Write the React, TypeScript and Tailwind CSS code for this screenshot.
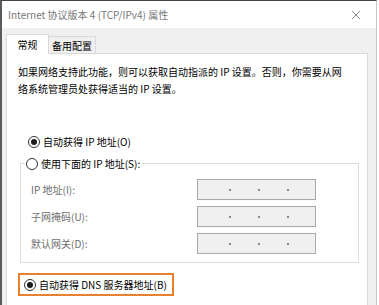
import React from "react";

const font = {
  fontFamily: '"Noto Sans CJK SC", "Noto Sans", sans-serif',
};

function Radio({ checked }: { checked?: boolean }) {
  return (
    <span className="flex h-[12px] w-[12px] shrink-0 items-center justify-center rounded-full border border-[#333] bg-white">
      {checked && <span className="h-[6px] w-[6px] rounded-full bg-[#1a1a1a]" />}
    </span>
  );
}

function IpBox() {
  return (
    <div className="flex h-[21px] w-[119px] items-center border border-[#a9a9a9] bg-[#f0f0f0] pl-[31px] gap-[27px]">
      <span className="h-[2px] w-[2px] bg-[#888]" />
      <span className="h-[2px] w-[2px] bg-[#888]" />
      <span className="h-[2px] w-[2px] bg-[#888]" />
    </div>
  );
}

export default function App() {
  return (
    <div className="h-[305px] w-[379px] overflow-hidden bg-white" style={font}>
      <div className="flex h-[320px] w-[377px] flex-col border-l-2 border-t border-r border-l-[#5a5a5a] border-t-[#444] border-r-[#c8c8c8]">
        {/* title bar */}
        <div className="flex h-[27px] shrink-0 items-center justify-between bg-white pl-[6px] pr-[15px]">
          <span className="text-[10px] text-[#777]">Internet 协议版本 4 (TCP/IPv4) 属性</span>
          <svg width="10" height="10" viewBox="0 0 10 10">
            <path d="M1 1 L9 9 M9 1 L1 9" stroke="#8a8a8a" strokeWidth="1" />
          </svg>
        </div>

        <div className="flex flex-1 flex-col bg-[#f0f0f0] pl-[4px] pr-[8px] pt-[6px]">
          {/* tabs */}
          <div className="relative z-10 flex items-end">
            <div className="-mb-px flex h-[20px] w-[43px] items-center justify-center border border-b-0 border-[#d9d9d9] bg-white text-[10px] text-black">
              常规
            </div>
            <div className="flex h-[17px] w-[47px] items-center justify-center border border-l-0 border-b-0 border-[#d9d9d9] bg-[#f0f0f0] text-[10px] text-black">
              备用配置
            </div>
          </div>

          {/* panel */}
          <div className="flex flex-1 flex-col border border-[#d9d9d9] bg-white pl-[11px] pr-[6px] pt-[9px]">
            <p className="text-[10px] leading-[17px] text-black">
              如果网络支持此功能，则可以获取自动指派的 IP 设置。否则，你需要从网
              <br />
              络系统管理员处获得适当的 IP 设置。
            </p>

            <div className="mt-[36px] flex h-[17px] items-center gap-[3px] pl-[10px] text-[10px] text-black">
              <Radio checked />
              <span>自动获得 IP 地址(O)</span>
            </div>

            <div className="relative mt-[13px] ml-[2px] h-[100px] w-[339px] border border-[#dcdcdc]">
              <div className="absolute -top-[9px] left-[4px] flex h-[17px] items-center gap-[3px] bg-white pl-[1px] pr-[2px] text-[10px] text-black">
                <Radio />
                <span>使用下面的 IP 地址(S):</span>
              </div>
              <div className="flex flex-col gap-[6px] pl-[10px] pt-[15px]">
                <div className="flex items-center justify-between pr-[42px]">
                  <span className="text-[10px] text-[#6d6d6d]">IP 地址(I):</span>
                  <IpBox />
                </div>
                <div className="flex items-center justify-between pr-[42px]">
                  <span className="text-[10px] text-[#6d6d6d]">子网掩码(U):</span>
                  <IpBox />
                </div>
                <div className="flex items-center justify-between pr-[42px]">
                  <span className="text-[10px] text-[#6d6d6d]">默认网关(D):</span>
                  <IpBox />
                </div>
              </div>
            </div>

            <div className="mt-[10px] flex h-[23px] w-[156px] items-center gap-[3px] border-2 border-[#e8802f] pl-[4px] text-[10px] text-black">
              <Radio checked />
              <span>自动获得 DNS 服务器地址(B)</span>
            </div>

            <div className="mt-[9px] flex h-[17px] items-center gap-[3px] pl-[5px] text-[10px] text-black">
              <Radio />
              <span>使用下面的 DNS 服务器地址(E):</span>
            </div>
          </div>
        </div>
      </div>
    </div>
  );
}
